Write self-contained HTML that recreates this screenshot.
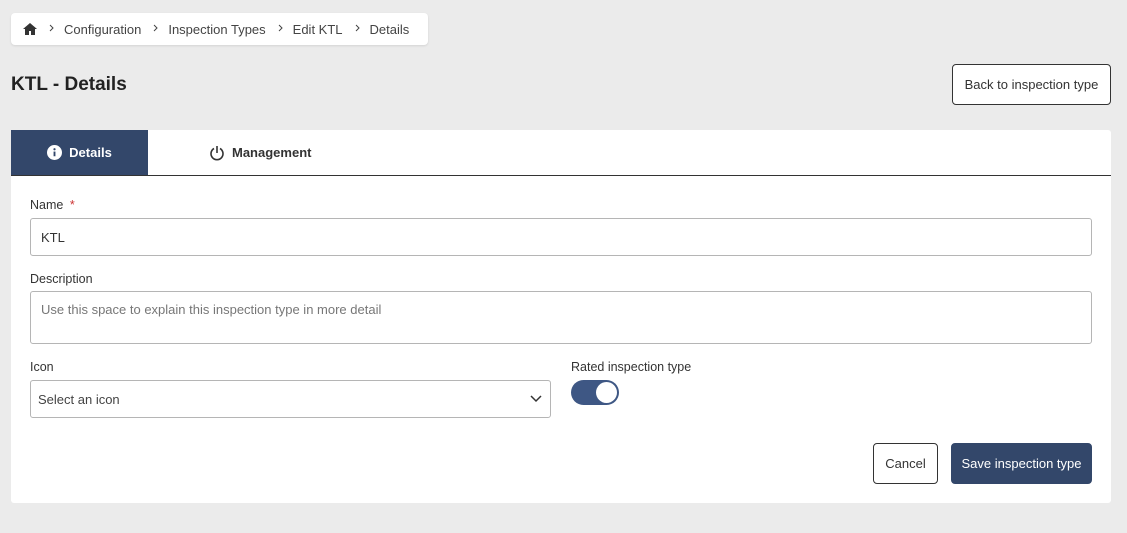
<!DOCTYPE html>
<html><head><meta charset="utf-8"><style>
*{box-sizing:border-box;margin:0;padding:0}
body{width:1127px;height:533px;background:#ebebeb;font-family:"Liberation Sans",sans-serif;color:#333;position:relative;overflow:hidden}
.abs{position:absolute}
.bc{left:11px;top:13px;width:417px;height:32px;background:#fff;border-radius:4px;box-shadow:0 1px 2px rgba(0,0,0,.1);font-size:13px;color:#444;display:flex;align-items:center;padding-left:12px}
.bc svg.s{margin:0 10px 3px 12px}
h1{position:absolute;left:11px;top:74px;font-size:19px;font-weight:bold;color:#222}
.btn{position:absolute;border:1px solid #333;border-radius:4px;background:#fff;font-size:13px;color:#333;display:flex;align-items:center;justify-content:center}
.panel{left:11px;top:130px;width:1100px;height:373px;background:#fff;border-radius:3px}
.tabs{left:0;top:0;width:1100px;height:46px;border-bottom:1.5px solid #333}
.t1{left:0;top:0;width:137px;height:45px;background:#33476a;color:#fff;font-size:13px;font-weight:bold;display:flex;align-items:center;justify-content:center;gap:7px}
.t2{left:198px;top:0;height:45px;color:#333;font-size:13px;font-weight:bold;display:flex;align-items:center;gap:7px}
.lbl{font-size:12.5px;color:#333}
.inp{border:1px solid #b5b5b5;border-radius:3px;font-size:13px;display:flex;align-items:center;padding-left:10px}
</style></head><body>
<div class="abs bc">
<svg width="14" height="12" viewBox="0 0 14 12"><path d="M7 0L0 6h2v6h4V8h2v4h4V6h2z" fill="#333"/></svg>
<svg class="s" width="5" height="8" viewBox="0 0 5 8"><path d="M1 1l3 3-3 3" stroke="#444" fill="none"/></svg>Configuration<svg class="s" width="5" height="8" viewBox="0 0 5 8"><path d="M1 1l3 3-3 3" stroke="#444" fill="none"/></svg>Inspection Types<svg class="s" width="5" height="8" viewBox="0 0 5 8"><path d="M1 1l3 3-3 3" stroke="#444" fill="none"/></svg>Edit KTL<svg class="s" width="5" height="8" viewBox="0 0 5 8"><path d="M1 1l3 3-3 3" stroke="#444" fill="none"/></svg>Details
</div>
<h1>KTL - Details</h1>
<div class="btn" style="left:952px;top:64px;width:159px;height:41px">Back to inspection type</div>
<div class="abs panel">
 <div class="abs tabs"></div>
 <div class="abs t1"><svg width="15" height="15" viewBox="0 0 16 16"><circle cx="8" cy="8" r="8" fill="#fff"/><rect x="7" y="7" width="2" height="5" fill="#33476a"/><circle cx="8" cy="4.5" r="1.2" fill="#33476a"/></svg>Details</div>
 <div class="abs t2"><svg width="16" height="16" viewBox="0 0 16 16"><path d="M5 3.5A6 6 0 1 0 11 3.5" stroke="#333" stroke-width="1.6" fill="none"/><path d="M8 1v7" stroke="#333" stroke-width="1.6"/></svg>Management</div>
 <div class="abs lbl" style="left:19px;top:68px">Name <span style="color:#c33;margin-left:3px">*</span></div>
 <div class="abs inp" style="left:19px;top:88px;width:1062px;height:38px;color:#333">KTL</div>
 <div class="abs lbl" style="left:19px;top:142px">Description</div>
 <div class="abs inp" style="left:19px;top:161px;width:1062px;height:53px;align-items:flex-start;padding-top:10px;color:#777">Use this space to explain this inspection type in more detail</div>
 <div class="abs lbl" style="left:19px;top:230px">Icon</div>
 <div class="abs inp" style="left:19px;top:250px;width:521px;height:38px;color:#444;padding-left:7px">Select an icon
  <svg class="abs" style="right:8px;top:14px" width="12" height="8" viewBox="0 0 12 8"><path d="M1 1l5 5 5-5" stroke="#333" stroke-width="1.5" fill="none"/></svg></div>
 <div class="abs lbl" style="left:560px;top:230px">Rated inspection type</div>
 <div class="abs" style="left:560px;top:250px;width:48px;height:25px;border-radius:13px;background:#3e5784"><div class="abs" style="left:25px;top:2px;width:21px;height:21px;border-radius:50%;background:#fff"></div></div>
 <div class="btn" style="left:862px;top:313px;width:65px;height:41px">Cancel</div>
 <div class="btn" style="left:940px;top:313px;width:141px;height:41px;background:#33476a;border-color:#33476a;color:#fff">Save inspection type</div>
</div>
</body></html>
